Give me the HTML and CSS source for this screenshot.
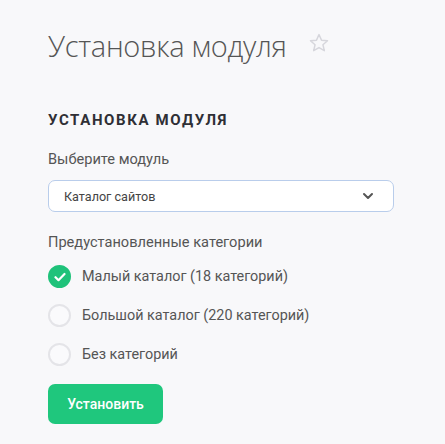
FILE: index.html
```html
<!DOCTYPE html>
<html lang="ru">
<head>
<meta charset="utf-8">
<link rel="stylesheet" href="styles.css">
</head>
<body>
<div class="page">
  <div class="title-row">
    <h1 class="title">Установка модуля</h1>
    <svg class="star" width="22" height="22" viewBox="0 0 24 24"><path d="M12 2.8l2.7 6.1 6.6.6-5 4.4 1.5 6.5L12 17l-5.8 3.4 1.5-6.5-5-4.4 6.6-.6z" fill="none" stroke="#d6d6dc" stroke-width="1.6" stroke-linejoin="round"/></svg>
  </div>
  <h2 class="section">Установка модуля</h2>
  <div class="label">Выберите модуль</div>
  <div class="select">
    <span>Каталог сайтов</span>
    <svg class="chev" width="12" height="8" viewBox="0 0 12 8"><path d="M2 2l4 4 4-4" fill="none" stroke="#555" stroke-width="2" stroke-linecap="round" stroke-linejoin="round"/></svg>
  </div>
  <div class="label label2">Предустановленные категории</div>
  <div class="radios">
    <div class="radio checked"><span class="dot"><svg width="12" height="10" viewBox="0 0 12 10"><path d="M1.5 5.2l3 3 6-6.2" fill="none" stroke="#fff" stroke-width="2.2" stroke-linecap="round" stroke-linejoin="round"/></svg></span>Малый каталог (18 категорий)</div>
    <div class="radio"><span class="dot"></span>Большой каталог (220 категорий)</div>
    <div class="radio"><span class="dot"></span>Без категорий</div>
  </div>
  <button class="btn">Установить</button>
</div>
</body>
</html>
```
FILE: styles.css
```css
html, body { margin: 0; padding: 0; background: #f8f8fa; }
body { font-family: Roboto, sans-serif; color: #444; }
.page { padding: 26px 0 0 48px; width: 346px; }
.title-row { display: flex; align-items: center; gap: 21px; height: 40px; }
.title { margin: 0; font-family: "Open Sans", sans-serif; font-weight: 300; font-size: 29px; color: #555; line-height: 40px; letter-spacing: -0.3px; }
.star { margin-top: -6px; }
.section { margin: 44px 0 0; font-size: 15px; font-weight: 700; text-transform: uppercase; letter-spacing: 1.6px; color: #2f2f35; line-height: 20px; }
.label { margin-top: 19px; font-size: 14.6px; line-height: 20px; color: #555; }
.select { margin-top: 11px; height: 32px; box-sizing: border-box; border: 1.5px solid #b9cdeb; border-radius: 7px; background: #fff; display: flex; align-items: center; justify-content: space-between; padding: 0 19px 0 15px; font-size: 12.6px; color: #444; }
.label2 { margin-top: 20px; }
.radios { margin-top: 13px; display: flex; flex-direction: column; gap: 16px; }
.radio { display: flex; align-items: center; gap: 11px; font-size: 14.4px; line-height: 23px; color: #555; }
.dot { width: 23px; height: 23px; box-sizing: border-box; border-radius: 50%; border: 2px solid #e4e4e8; background: #fafafc; display: flex; align-items: center; justify-content: center; }
.checked .dot { background: #1fc27a; border-color: #1fc27a; }
.btn { margin-top: 18px; width: 115px; height: 40px; border: 0; border-radius: 7px; background: #1fc77d; color: #fff; font-family: Roboto, sans-serif; font-size: 14px; font-weight: 500; padding: 0; }
```
